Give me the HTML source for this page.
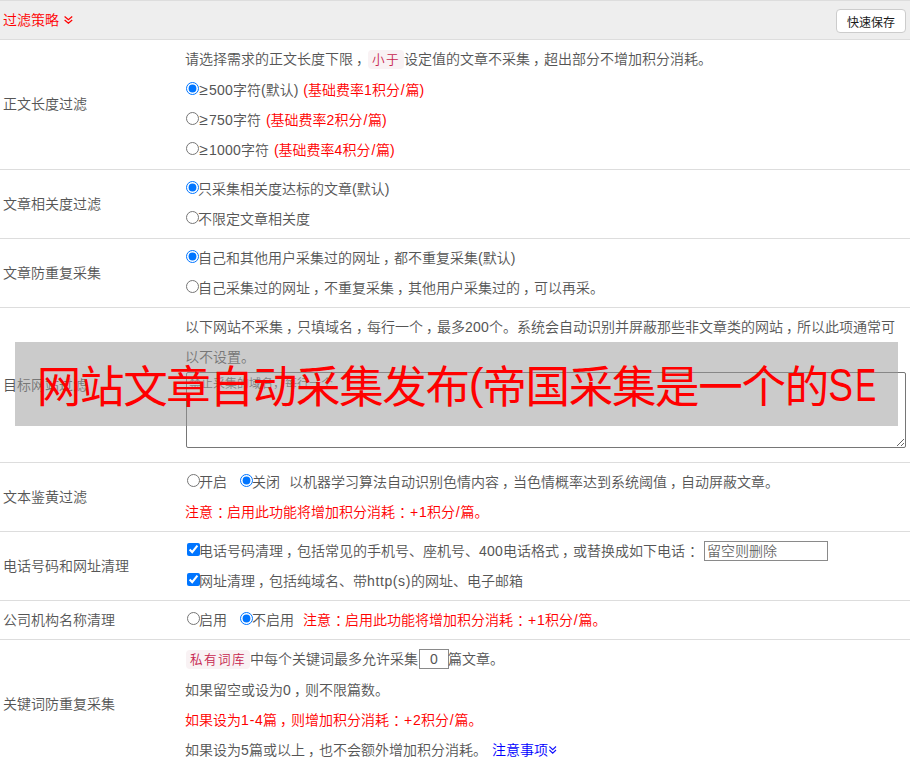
<!DOCTYPE html>
<html lang="zh-CN">
<head>
<meta charset="utf-8">
<title>过滤策略</title>
<style>
html,body{margin:0;padding:0;background:#fff;}
body{width:912px;height:768px;overflow:hidden;position:relative;
  font-family:"Liberation Sans","Noto Sans CJK SC",sans-serif;font-size:14px;color:#555;font-weight:350;}
table{border-collapse:collapse;width:910px;table-layout:fixed;}
td{padding:4px 4px 4px 3px;border-bottom:1px solid #ddd;line-height:30px;vertical-align:middle;white-space:nowrap;}
td.w{white-space:normal;}
td.ws{word-spacing:1px;}
tr.hd td{background:#eee;border-top:1px solid #ddd;height:30px;line-height:30px;padding:4px 4px 4px 3px;}
td.u{padding-top:3px;padding-bottom:5px;}
.red{color:#f00;}
.blue{color:#00f;}
.tag{background:#f9f2f4;color:#c7254e;padding:3px 4px 2px;border-radius:4px;font-size:12.6px;letter-spacing:1.4px;line-height:30px;margin:0 0 0 1px;}
.btn{position:absolute;left:836px;top:9px;width:68px;height:22px;line-height:26px;text-align:center;border:1px solid #ccc;border-radius:4px;background:#fff;color:#1a1a1a;font-weight:400;font-size:12px;}
input[type=radio],input[type=checkbox]{margin:0 -1px 0 1px;width:13px;height:13px;vertical-align:0px;}
textarea{display:block;box-sizing:border-box;width:720px;height:76px;border:1px solid #767676;border-radius:2px;padding:3px 2px 2px;font:inherit;font-size:12px;line-height:16px;resize:both;margin:0 0 10px 1px;color:#555;}
textarea::placeholder,.ti::placeholder{color:#6a6a6a;opacity:1;}
.ti{box-sizing:border-box;border:1px solid #8a8a8a;height:20px;padding:1px 2px;font:inherit;font-size:14px;line-height:16px;vertical-align:0px;color:#555;margin:0 -1px 0 1px;}
.ge{font-size:15.5px;line-height:1px;margin-left:1.2px;margin-right:1.3px;}
.d{letter-spacing:.22px;}
.sl{padding:0 .8px;}
.pl{padding:0 .9px;}
.hy{padding:0 .65px;}
.sp{display:inline-block;}
.c{position:relative;left:3px;}
.k{position:relative;left:4px;}
.ht{letter-spacing:.62px;}
#wm{position:absolute;left:15px;top:342px;width:883px;height:84px;background:rgba(152,152,152,.5);}
#wmt{position:absolute;left:36.75px;top:351.5px;font-weight:400;font-size:44.5px;letter-spacing:-1.3px;line-height:70px;color:#f00;white-space:nowrap;}
#wmt .se{display:inline-block;font-size:47px;transform-origin:0 50%;transform:translate(.3px,-1.7px) scaleX(.79);}
#wmt .e2{transform:translate(-2.7px,-1.7px) scaleX(.67);}
#wmt .pr{position:relative;top:-4px;}
svg.chev{display:inline-block;vertical-align:-1px;}
</style>
</head>
<body>
<table>
<colgroup><col style="width:182px"><col style="width:728px"></colgroup>
<tr class="hd"><td colspan="2"><span class="red">过滤策略</span><svg class="chev" style="margin-left:5px;vertical-align:1px" width="9" height="8" viewBox="0 0 9 8"><path d="M0.6 0.5 L4.4 3.7 L8.2 0.5 M0.6 4 L4.4 7.2 L8.2 4" fill="none" stroke="#f00" stroke-width="1.25"/></svg><span class="btn">快速保存</span></td></tr>
<tr><td class="l u">正文长度过滤</td><td class="ws">
请选择需求的正文长度下限<span class="c">，</span><span class="tag">小于</span>设定值的文章不采集<span class="c">，</span>超出部分不增加积分消耗。<br>
<input type="radio" name="a" checked><span class="ge">≥</span><span class="d">500</span>字符(默认) <span class="red">(基础费率<span class="d">1</span>积分<span class="sl">/</span>篇)</span><br>
<input type="radio" name="a"><span class="ge">≥</span><span class="d">750</span>字符 <span class="red">(基础费率<span class="d">2</span>积分<span class="sl">/</span>篇)</span><br>
<input type="radio" name="a"><span class="ge">≥</span><span class="d">1000</span>字符 <span class="red">(基础费率<span class="d">4</span>积分<span class="sl">/</span>篇)</span>
</td></tr>
<tr><td class="l">文章相关度过滤</td><td>
<input type="radio" name="b" checked>只采集相关度达标的文章(默认)<br>
<input type="radio" name="b">不限定文章相关度
</td></tr>
<tr><td class="l">文章防重复采集</td><td>
<input type="radio" name="c" checked>自己和其他用户采集过的网址<span class="c">，</span>都不重复采集(默认)<br>
<input type="radio" name="c">自己采集过的网址<span class="c">，</span>不重复采集<span class="c">，</span>其他用户采集过的<span class="c">，</span>可以再采。
</td></tr>
<tr><td class="l">目标网站过滤</td><td class="w">
以下网站不采集<span class="c">，</span>只填域名<span class="c">，</span>每行一个<span class="c">，</span>最多<span class="d">200</span>个。系统会自动识别并屏蔽那些非文章类的网站<span class="c">，</span>所以此项通常可以不设置。<br>
<textarea placeholder="禁止采集的域名，每行一个"></textarea>
</td></tr>
<tr><td class="l">文本鉴黄过滤</td><td>
<input type="radio" name="d" style="margin-left:2px">开启<span class="sp" style="width:12px"></span><input type="radio" name="d" checked>关闭<span class="sp" style="width:9px"></span>以机器学习算法自动识别色情内容<span class="c">，</span>当色情概率达到系统阈值<span class="c">，</span>自动屏蔽文章。<br>
<span class="red">注意<span class="k">：</span>启用此功能将增加积分消耗<span class="k">：</span><span class="pl">+</span><span class="d">1</span>积分<span class="sl">/</span>篇。</span>
</td></tr>
<tr><td class="l">电话号码和网址清理</td><td>
<input type="checkbox" checked style="margin-left:2px">电话号码清理<span class="c">，</span>包括常见的手机号、座机号、<span class="d">400</span>电话格式<span class="c">，</span>或替换成如下电话<span class="k">：</span><span class="sp" style="width:4px"></span><input class="ti" type="text" placeholder="留空则删除" style="width:124px"><br>
<input type="checkbox" checked style="margin-left:2px">网址清理<span class="c">，</span>包括纯域名、带<span class="ht">http(s)</span>的网址、电子邮箱
</td></tr>
<tr><td class="l">公司机构名称清理</td><td>
<input type="radio" name="e" style="margin-left:2px">启用<span class="sp" style="width:12px"></span><input type="radio" name="e" checked>不启用<span class="sp" style="width:9px"></span><span class="red">注意<span class="k">：</span>启用此功能将增加积分消耗<span class="k">：</span><span class="pl">+</span><span class="d">1</span>积分<span class="sl">/</span>篇。</span>
</td></tr>
<tr><td class="l u">关键词防重复采集</td><td class="ws">
<span class="tag">私有词库</span>中每个关键词最多允许采集<input class="ti" type="text" value="0" style="width:30px;text-align:center">篇文章。<br>
如果留空或设为<span class="d">0</span><span class="c">，</span>则不限篇数。<br>
<span class="red">如果设为<span class="d">1</span><span class="hy">-</span><span class="d">4</span>篇<span class="c">，</span>则增加积分消耗<span class="k">：</span><span class="pl">+</span><span class="d">2</span>积分<span class="sl">/</span>篇。</span><br>
如果设为<span class="d">5</span>篇或以上<span class="c">，</span>也不会额外增加积分消耗。 <span class="blue">注意事项</span><svg class="chev" style="margin-left:1.5px;vertical-align:1.5px" width="8" height="8" viewBox="0 0 8 8"><path d="M0.4 0.5 L3.7 3.7 L7 0.5 M0.4 4 L3.7 7.2 L7 4" fill="none" stroke="#11f" stroke-width="1.1"/></svg>
</td></tr>
</table>
<div id="wm"></div>
<div id="wmt">网站文章自动采集发布<span class="pr">(</span>帝国采集是一个的<span class="se">S</span><span class="se e2">E</span></div>
</body>
</html>
